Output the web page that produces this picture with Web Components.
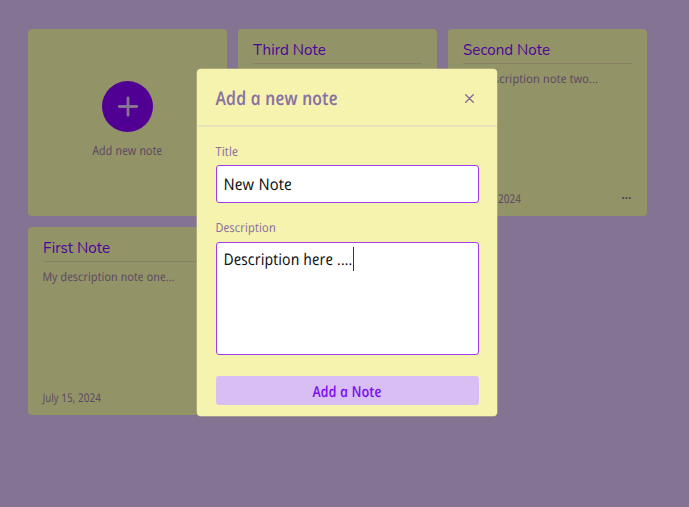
<!DOCTYPE html>
<html lang="en">
<head>
<meta charset="utf-8">
<title>Notes</title>
<style>
html,body{margin:0;height:100%;overflow:hidden;background:#847393}
body{font-family:"Open Sans",sans-serif}
</style>
</head>
<body>
<notes-app></notes-app>
<script>
const define = (name, html, setup) => customElements.define(name, class extends HTMLElement {
  connectedCallback() {
    if (this.shadowRoot) return;
    this.attachShadow({mode: 'open'}).innerHTML = html;
    if (setup) setup(this, this.shadowRoot);
  }
});

// Upright handwriting line, fitted to the width in its "w" attribute.
define('script-text', `
<style>
:host{display:inline-block;white-space:nowrap;font-family:"Open Sans","Noto Sans",sans-serif;font-style:italic;font-weight:400;line-height:20px;height:20px}
:host([plain]){font-family:Nunito,"Open Sans",sans-serif;font-style:normal;font-weight:450}
span{display:inline-block;transform-origin:0 72%}
</style><span><slot></slot></span>`, (el, root) => {
  const w = +el.getAttribute('w');
  el.style.width = w + 'px';
  const s = root.querySelector('span');
  const k = w / s.offsetWidth;
  s.style.transform = el.hasAttribute('plain') ? `scaleX(${k})` : `scaleX(${k}) skewX(11deg)`;
});

define('note-card', `
<style>
:host{display:flex;flex-direction:column;box-sizing:border-box;background:#939368;border-radius:4px;padding:11px 15px 7px;color:#5c4a62;font-size:12px}
.title{height:23px;border-bottom:1px solid #8a8064;color:#4b0596;font-size:15px}
.title ::slotted(*){display:block}
.body{flex:1;padding-top:5px}
footer{display:flex;justify-content:space-between;height:20px}
svg{margin-top:7px;margin-right:1px}
</style>
<div class="title"><slot name="title"></slot></div>
<div class="body"><slot></slot></div>
<footer><slot name="date"></slot><svg width="9" height="4" viewBox="0 0 9 4" fill="#503b5b"><circle cx="1.2" cy="2" r="1.1"/><circle cx="4.5" cy="2" r="1.1"/><circle cx="7.8" cy="2" r="1.1"/></svg></footer>`);

define('add-card', `
<style>
:host{display:flex;flex-direction:column;align-items:center;box-sizing:border-box;background:#939368;border-radius:4px;padding-top:52.5px;color:#5c4a62;font-size:12.5px}
.circle{width:51px;height:51px;border-radius:50%;background:#510094;display:grid;place-items:center;margin-bottom:9px}
svg{display:block}
</style>
<div class="circle"><svg width="22" height="22" viewBox="0 0 22 22" stroke="#847393" stroke-width="2.8" stroke-linecap="round"><path d="M11 1.8V19.2M2.3 10.5H19.7"/></svg></div>
<slot></slot>`);

define('text-field', `
<style>
:host{display:block}
.label{height:20px;margin-bottom:3px;color:#8c70a0;font-size:12.5px}
.box{box-sizing:border-box;background:#fff;border:1px solid #a43bea;border-radius:3px;padding:8px 7px;height:38px;color:#111;font-size:16px;display:flex}
:host([area]) .label{margin-bottom:4px}
:host([area]) .box{height:113px;padding-top:6px}
i{display:none;width:1px;height:24px;background:#333;margin-top:-2px}
:host([area]) i{display:block}
</style>
<div class="label"><slot name="label"></slot></div>
<div class="box"><slot></slot><i></i></div>`);

define('note-modal', `
<style>
:host{display:block;box-sizing:border-box;width:300px;height:347px;background:#f5f3ad;border-radius:4px;box-shadow:0 0 0 .5px #c5c28b}
header{height:56px;border-bottom:2px solid #e8e4ba;box-sizing:content-box;display:flex;justify-content:space-between;align-items:center;padding:0 23px 0 19px;color:#8970a5;font-size:19px}
header script-text{font-weight:600;padding-top:2px}
header svg{margin-top:3px}
main{padding:15px 18px 0 19px;display:flex;flex-direction:column;gap:15px}
button{display:flex;align-items:center;justify-content:center;height:29px;border:0;border-radius:3px;background:#d9bef4;color:#7d10ef;padding:0;font-size:15px;margin-top:6px}
button script-text{font-weight:600}
</style>
<header><script-text w="122">Add a new note</script-text>
<svg width="9" height="9" viewBox="0 0 9 9" stroke="#846996" stroke-width="1.3" stroke-linecap="round"><path d="M.7.7L8.3 8.3M8.3.7L.7 8.3"/></svg></header>
<main>
<text-field><script-text slot="label" w="23">Title</script-text><script-text w="68">New Note</script-text></text-field>
<text-field area><script-text slot="label" w="60">Description</script-text><script-text w="129">Description here ....</script-text></text-field>
<button><script-text w="69">Add a Note</script-text></button>
</main>`);

define('notes-app', `
<style>
:host{display:block;position:relative;height:507px;background:#847393}
.grid{display:grid;grid-template-columns:repeat(3,198.6px);grid-auto-rows:187.5px;gap:11.4px;padding:28.5px 28.4px}
note-modal{position:absolute;left:197px;top:69px}
</style>
<div class="grid">
<add-card><script-text w="70">Add new note</script-text></add-card>
<note-card><script-text plain slot="title" w="73">Third Note</script-text></note-card>
<note-card><script-text plain slot="title" w="87">Second Note</script-text><script-text w="136">My description note two...</script-text><script-text slot="date" w="59">July 15, 2024</script-text></note-card>
<note-card><script-text plain slot="title" w="67">First Note</script-text><script-text w="132">My description note one...</script-text><script-text slot="date" w="59">July 15, 2024</script-text></note-card>
</div>
<note-modal></note-modal>`);
</script>
</body>
</html>
